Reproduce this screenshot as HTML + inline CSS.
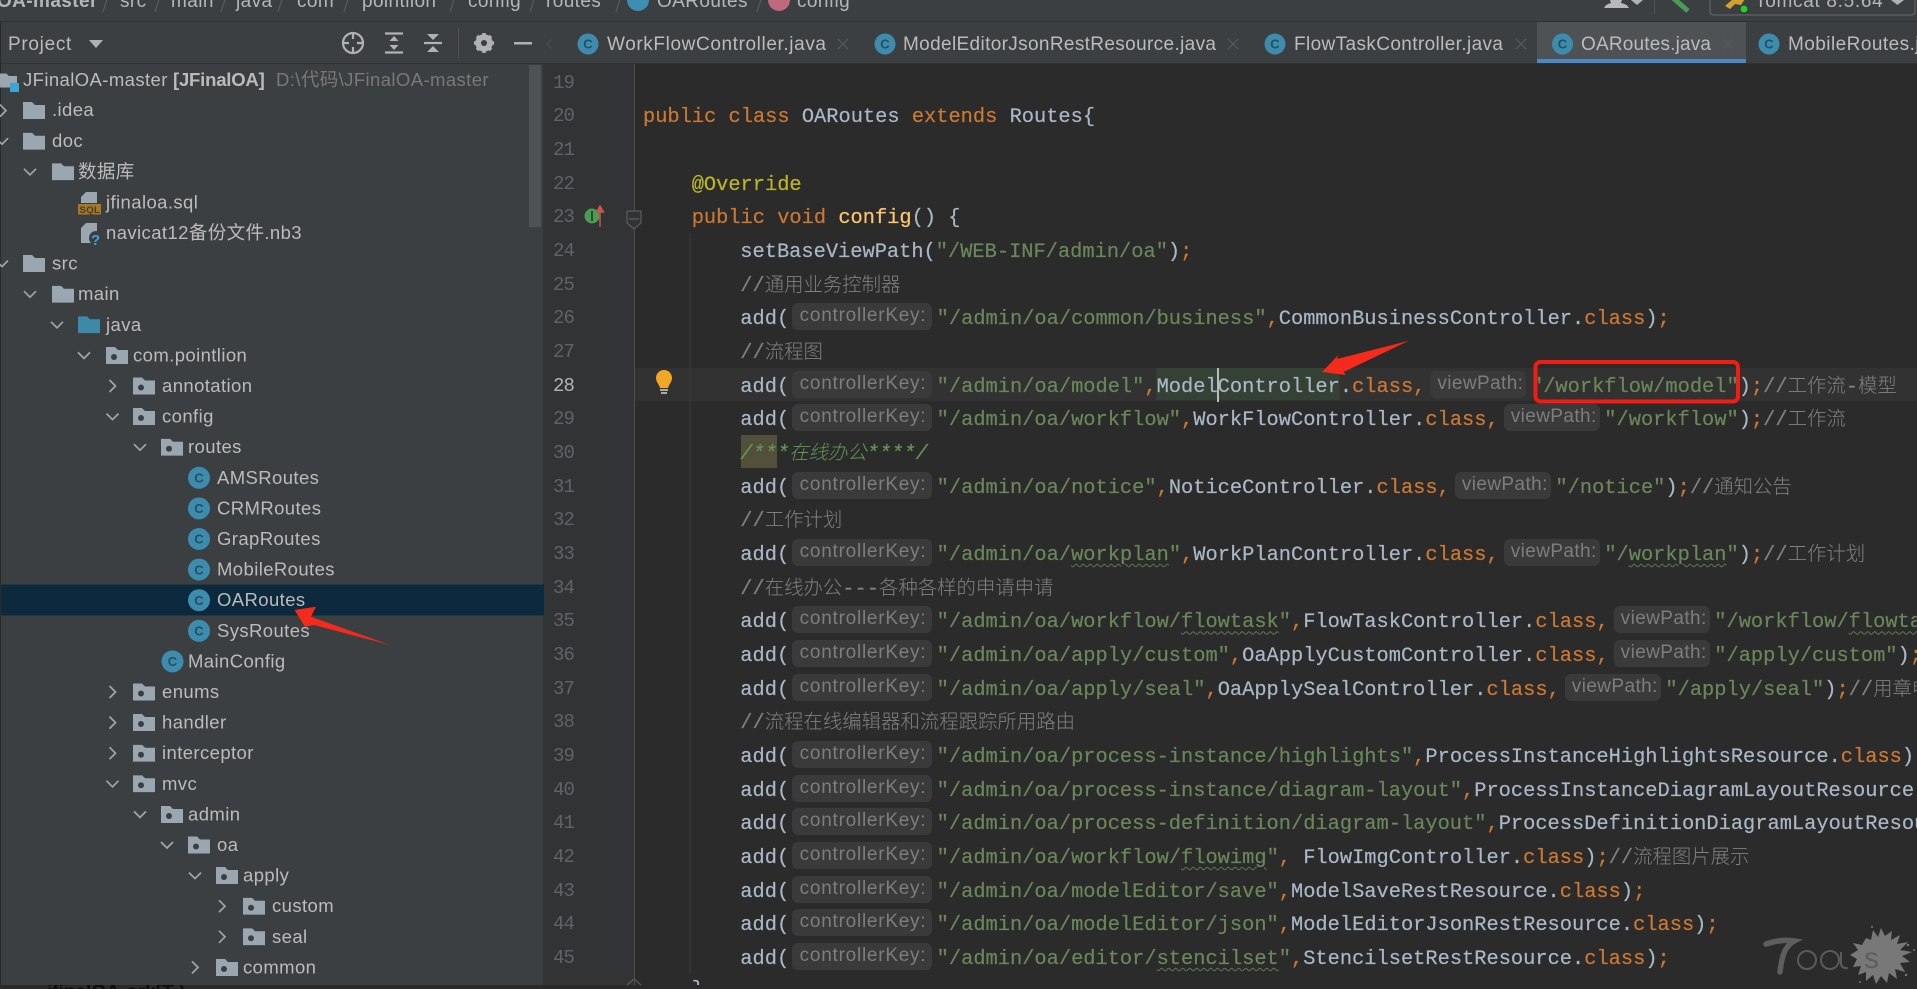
<!DOCTYPE html>
<html lang="zh">
<head>
<meta charset="utf-8">
<title>OARoutes.java</title>
<style>
html,body{margin:0;padding:0;background:#2b2b2b;}
#root{position:relative;width:1917px;height:989px;overflow:hidden;background:#2a2a2a;filter:blur(.3px);}
svg{position:absolute;left:0;top:0;}
#ed{position:absolute;left:0;top:0;width:1917px;height:985px;overflow:hidden;}
.l{position:absolute;left:740.300px;margin-top:3px;height:34px;white-space:nowrap;font:20.36px/34px "Liberation Mono","Noto Sans CJK SC",monospace;color:#a9b7c6;-webkit-text-stroke:.2px;}
.k{color:#cc7832}.s{color:#6a8759}.c{color:#808080}.m{color:#ffc66d}.a{color:#bbb529}
.z{font-family:"Noto Sans CJK SC","Liberation Sans",sans-serif;font-size:19.4px;font-weight:300;line-height:1;-webkit-text-stroke:0;}
.d{color:#629755;font-style:italic}
u{text-decoration:underline wavy #5d7a50 1px;text-underline-offset:3px;}
.h,.v{display:inline-block;height:27px;vertical-align:-6px;background:#3a3a3a;border-radius:6px;box-sizing:border-box;padding-left:8px;color:#7d7d7d;font:19px/26px "Liberation Sans",sans-serif;letter-spacing:.75px;overflow:hidden;-webkit-text-stroke:0;}
.h{width:140px;margin:0 5px 0 2.500px;}
.v{width:96px;margin:0 4.600px 0 5px;padding-left:7px;letter-spacing:.4px;}
.n{position:absolute;left:553px;margin-top:1px;height:34px;font:19px/34px "Liberation Mono",monospace;letter-spacing:-.9px;color:#606366;}
</style>
</head>
<body>
<div id="root">
<svg width="1917" height="989" viewBox="0 0 1917 989" xmlns="http://www.w3.org/2000/svg">
<defs>
<symbol id="f" viewBox="0 0 22 17" width="22" height="17"><path d="M0 0h9l3 3h10v14H0z" fill="#9aa7b0"/></symbol>
<symbol id="p" viewBox="0 0 22 17" width="22" height="17"><path d="M0 0h9l3 3h10v14H0z" fill="#9aa7b0"/><circle cx="8" cy="10" r="3" fill="#3c3f41"/></symbol>
<symbol id="b" viewBox="0 0 22 17" width="22" height="17"><path d="M0 0h9l3 3h10v14H0z" fill="#3e89a8"/></symbol>
<path id="cr" d="M-3-6l6 6-6 6" fill="none" stroke="#a3a6a8" stroke-width="1.7"/>
<path id="cd" d="M-6-3l6 6 6-6" fill="none" stroke="#a3a6a8" stroke-width="1.7"/>
</defs>

<!-- bottom cut-off page text -->
<text x="47" y="998" font-family="Liberation Sans,sans-serif" font-size="19" font-weight="bold" fill="#0d0d0d">jfinalOA-ork[T )</text>

<!-- backgrounds -->
<rect x="0" y="0" width="1917" height="21" fill="#3c3f41"/>
<rect x="0" y="21" width="1917" height="1" fill="#2f3133"/>
<rect x="1" y="22" width="542" height="963" fill="#3c3f41"/>
<rect x="0" y="22" width="1" height="963" fill="#2b2b2b"/>
<rect x="543" y="22" width="1374" height="41" fill="#3c3f41"/>
<rect x="1" y="63" width="1916" height="1" fill="#323232"/>
<rect x="543" y="64" width="91" height="921" fill="#313335"/>
<rect x="634" y="64" width="1283" height="921" fill="#2b2b2b"/>
<rect x="634" y="368" width="1283" height="33" fill="#323232"/>
<rect x="1156.500" y="368" width="183" height="32" fill="#344134"/>
<rect x="741" y="435" width="36" height="33" fill="#52503a"/>
<rect x="634" y="64" width="1" height="921" fill="#4c4e50"/>
<rect x="689.500" y="233" width="1" height="740" fill="#3b3b3b"/>
<rect x="543" y="584" width="1" height="31" fill="#0d293e"/>

<!-- breadcrumb -->
<g font-family="Liberation Sans,Noto Sans CJK SC,sans-serif" font-size="19" fill="#b4b6b8" letter-spacing=".4">
<text x="-3" y="7" font-weight="bold">OA-master</text>
<text x="120" y="7">src</text><text x="171" y="7">main</text><text x="236" y="7">java</text><text x="297" y="7">com</text>
<text x="362" y="7">pointlion</text><text x="468" y="7">config</text><text x="546" y="7">routes</text>
<text x="657" y="7">OARoutes</text><text x="797" y="7">config</text>
<text x="1755" y="7" letter-spacing=".7">Tomcat 8.5.64</text>
</g>
<g stroke="#595b5d" stroke-width="1.2"><path d="M103 12l5-16M155 12l5-16M221 12l5-16M278 12l5-16M344 12l5-16M450 12l5-16M530 12l5-16M616 12l5-16M757 12l5-16"/></g>
<circle cx="638" cy="0" r="11" fill="#3c8fb2"/>
<circle cx="779" cy="0" r="11" fill="#c0687e"/>

<!-- top right -->
<path d="M1604 8q2-4 7-5l-1-3h12l-1 3q6 1 8 5z" fill="#b6b8ba"/>
<path d="M1631 0h12l-6 5z" fill="#afb1b3"/>
<rect x="1654" y="0" width="1" height="14" fill="#515355"/>
<path d="M1672-3l16 14" stroke="#499c54" stroke-width="5" fill="none"/>
<path d="M1710 0v11q0 4 4 4h197q4 0 4-4V0" fill="none" stroke="#606264" stroke-width="1.3"/>
<path d="M1725 6l8-7h12l-4 6-6-1-5 5z" fill="#d0a030"/>
<circle cx="1744" cy="9" r="3.4" fill="#17d827"/>
<path d="M1891 0h13l-6.500 5z" fill="#afb1b3"/>

<!-- project header -->
<text x="8" y="50" font-family="Liberation Sans,sans-serif" font-size="19" fill="#bbbbbb" letter-spacing=".7">Project</text>
<path d="M89 40h14l-7 8z" fill="#afb1b3"/>
<g fill="none" stroke="#afb1b3" stroke-width="2.200">
<circle cx="353" cy="43" r="10"/><path d="M353 33v6M353 47v6M343 43h6M357 43h6"/>
<path d="M385 33.500h18M385 52.500h18"/>
<path d="M424 43h18"/>
</g>
<path d="M394 36l4.500 5h-9zM394 50l4.500-5h-9z" fill="#afb1b3"/>
<path d="M427 34h12l-6 6zM433 46l6 6h-12z" fill="#afb1b3"/>
<rect x="458" y="28" width="1" height="30" fill="#515355"/>
<circle cx="484" cy="43" r="6.500" fill="none" stroke="#afb1b3" stroke-width="4.500"/>
<g stroke="#afb1b3" stroke-width="3.500"><path d="M484 33v20M474 43h20M477 36l14 14M491 36l-14 14"/></g>
<circle cx="484" cy="43" r="3" fill="#3c3f41"/>
<rect x="514" y="42" width="18" height="2.500" fill="#afb1b3"/>

<!-- scrollbar + selected row -->
<rect x="529" y="65" width="12" height="162" fill="#4f5254"/>
<rect x="1" y="584.500" width="542" height="31" fill="#0d293e"/>

<!-- tree icons -->
<use href="#f" x="-1" y="72" width="18" height="17"/>
<rect x="10" y="83" width="9" height="9" fill="#3ba5d9"/>
<use href="#cr" x="3" y="110.600"/><use href="#f" x="23" y="102"/>
<use href="#cd" x="2" y="141.200"/><use href="#f" x="23" y="132.700"/>
<use href="#cd" x="30" y="171.800"/><use href="#f" x="52" y="163.300"/>
<path d="M81 203v-6l5-5h11v11z" fill="#9aa7b0"/><rect x="78" y="204" width="23" height="10.500" fill="#a8771f"/>
<text x="79.500" y="213" font-family="Liberation Sans,sans-serif" font-size="9.500" font-weight="bold" fill="#3c3f41" letter-spacing=".4">SQL</text>
<path d="M81 243v-15l5-5h11v20z" fill="#9aa7b0"/>
<circle cx="96" cy="238" r="7" fill="#3c3f41"/>
<text x="91" y="245" font-family="Liberation Sans,sans-serif" font-size="15" font-weight="bold" fill="#3ba5d9">?</text>
<use href="#cd" x="2" y="263.600"/><use href="#f" x="23" y="255"/>
<use href="#cd" x="30" y="294.200"/><use href="#f" x="52" y="285.700"/>
<use href="#cd" x="57" y="324.800"/><use href="#b" x="78" y="316.300"/>
<use href="#cd" x="84" y="355.400"/><use href="#p" x="106" y="347"/>
<use href="#cr" x="112.500" y="386"/><use href="#p" x="133" y="377.500"/>
<use href="#cd" x="112.500" y="416.600"/><use href="#p" x="133" y="408"/>
<use href="#cd" x="140" y="447.200"/><use href="#p" x="161" y="438.700"/>
<use href="#cr" x="112.500" y="692"/><use href="#p" x="133" y="683.500"/>
<use href="#cr" x="112.500" y="722.600"/><use href="#p" x="133" y="714"/>
<use href="#cr" x="112.500" y="753.200"/><use href="#p" x="133" y="744.700"/>
<use href="#cd" x="112.500" y="783.800"/><use href="#p" x="133" y="775.300"/>
<use href="#cd" x="140" y="814.400"/><use href="#p" x="161" y="806"/>
<use href="#cd" x="167" y="845"/><use href="#p" x="188" y="836.500"/>
<use href="#cd" x="195" y="875.600"/><use href="#p" x="216" y="867"/>
<use href="#cr" x="222" y="906.200"/><use href="#p" x="243" y="897.700"/>
<use href="#cr" x="222" y="936.800"/><use href="#p" x="243" y="928.300"/>
<use href="#cr" x="195" y="967.400"/><use href="#p" x="216" y="959"/>

<!-- class icons -->
<g fill="#3d8cae">
<circle cx="199" cy="477.800" r="11"/><circle cx="199" cy="508.400" r="11"/><circle cx="199" cy="539" r="11"/><circle cx="199" cy="569.600" r="11"/><circle cx="199" cy="600.200" r="11"/><circle cx="199" cy="630.800" r="11"/><circle cx="172.500" cy="661.400" r="11"/>
<circle cx="588" cy="44" r="10.500"/><circle cx="885" cy="44" r="10.500"/><circle cx="1275" cy="44" r="10.500"/>
</g>
<rect x="1537" y="22" width="209" height="37" fill="#4e5254"/>
<rect x="1537" y="59" width="209" height="4" fill="#4a88c7"/>
<circle cx="1562.500" cy="44" r="10.500" fill="#3d8cae"/><circle cx="1769" cy="44" r="10.500" fill="#3d8cae"/>
<g font-family="Liberation Sans,sans-serif" font-size="13" font-weight="bold" fill="#24505f" text-anchor="middle">
<text x="199" y="482.500">C</text><text x="199" y="513">C</text><text x="199" y="543.700">C</text><text x="199" y="574.300">C</text><text x="199" y="605">C</text><text x="199" y="635.500">C</text><text x="172.500" y="666">C</text>
<text x="588" y="48.700">C</text><text x="885" y="48.700">C</text><text x="1275" y="48.700">C</text><text x="1562.500" y="48.700">C</text><text x="1769" y="48.700">C</text>
</g>

<!-- tree text -->
<g font-family="Liberation Sans,Noto Sans CJK SC,sans-serif" font-size="18.500" fill="#bbbbbb" letter-spacing=".4">
<text x="23" y="86">JFinalOA-master</text>
<text x="173" y="86" font-weight="bold" letter-spacing="-.2">[JFinalOA]</text>
<text x="276" y="86" fill="#787878">D:\代码\JFinalOA-master</text>
<text x="52" y="116">.idea</text>
<text x="52" y="147.200">doc</text>
<text x="78" y="177.800">数据库</text>
<text x="106" y="208.400">jfinaloa.sql</text>
<text x="106" y="239">navicat12备份文件.nb3</text>
<text x="52" y="269.600">src</text>
<text x="78" y="300.200">main</text>
<text x="106" y="330.800">java</text>
<text x="133" y="361.400">com.pointlion</text>
<text x="162" y="392">annotation</text>
<text x="162" y="422.600">config</text>
<text x="188" y="453.200">routes</text>
<text x="217" y="483.800">AMSRoutes</text>
<text x="217" y="514.400">CRMRoutes</text>
<text x="217" y="545">GrapRoutes</text>
<text x="217" y="575.600">MobileRoutes</text>
<text x="217" y="606.200">OARoutes</text>
<text x="217" y="636.800">SysRoutes</text>
<text x="188" y="667.400">MainConfig</text>
<text x="162" y="698">enums</text>
<text x="162" y="728.600">handler</text>
<text x="162" y="759.200">interceptor</text>
<text x="162" y="789.800">mvc</text>
<text x="188" y="820.400">admin</text>
<text x="217" y="851">oa</text>
<text x="243" y="881.600">apply</text>
<text x="272" y="912.200">custom</text>
<text x="272" y="942.800">seal</text>
<text x="243" y="973.400">common</text>
</g>

<!-- tabs text -->
<g font-family="Liberation Sans,sans-serif" font-size="19" fill="#bbbbbb">
<text x="607" y="50" textLength="219">WorkFlowController.java</text>
<text x="903" y="50" textLength="313">ModelEditorJsonRestResource.java</text>
<text x="1294" y="50" textLength="209">FlowTaskController.java</text>
<text x="1581" y="50" textLength="130">OARoutes.java</text>
<text x="1788" y="50" letter-spacing=".45">MobileRoutes.java</text>
</g>
<g stroke="#585b5d" stroke-width="1.200" fill="none"><path d="M838 39l10 10M848 39l-10 10M1228 39l10 10M1238 39l-10 10M1516 39l10 10M1526 39l-10 10M1723 39l10 10M1733 39l-10 10"/></g>
<path d="M552 39l-5 5 5 5" fill="none" stroke="#4b4e50" stroke-width="1.300"/>

<!-- gutter icons -->
<circle cx="592" cy="216" r="7.500" fill="#499c54"/>
<rect x="591" y="211" width="2" height="10" fill="#2b4a30"/>
<path d="M600 227v-16M596.500 212l3.500-6 3.500 6z" stroke="#c75450" stroke-width="1.500" fill="#c75450"/>
<path d="M627 211h14v12l-7 6-7-6zM629 219h10" fill="#313335" stroke="#5a5c5e" stroke-width="1.200"/>
<path d="M627 985l7-6 7 6" fill="none" stroke="#5a5c5e" stroke-width="1.200"/>
<path d="M664 370c-5 0-8 4-8 8 0 4 3 6 4 10h8c1-4 4-6 4-10 0-4-3-8-8-8z" fill="#f2a725"/>
<rect x="660" y="389" width="8" height="2" fill="#aaa"/><rect x="661" y="392" width="6" height="2" fill="#aaa"/>
</svg>

<div id="ed">
<div class="n" style="top:64.500px">19</div>
<div class="n" style="top:98.200px">20</div>
<div class="n" style="top:131.900px">21</div>
<div class="n" style="top:165.500px">22</div>
<div class="n" style="top:199.200px">23</div>
<div class="n" style="top:232.900px">24</div>
<div class="n" style="top:266.600px">25</div>
<div class="n" style="top:300.200px">26</div>
<div class="n" style="top:333.900px">27</div>
<div class="n" style="top:367.600px;color:#b4b4b4">28</div>
<div class="n" style="top:401.300px">29</div>
<div class="n" style="top:435px">30</div>
<div class="n" style="top:468.600px">31</div>
<div class="n" style="top:502.300px">32</div>
<div class="n" style="top:536px">33</div>
<div class="n" style="top:569.700px">34</div>
<div class="n" style="top:603.300px">35</div>
<div class="n" style="top:637px">36</div>
<div class="n" style="top:670.700px">37</div>
<div class="n" style="top:704.400px">38</div>
<div class="n" style="top:738px">39</div>
<div class="n" style="top:771.700px">40</div>
<div class="n" style="top:805.400px">41</div>
<div class="n" style="top:839.100px">42</div>
<div class="n" style="top:872.700px">43</div>
<div class="n" style="top:906.400px">44</div>
<div class="n" style="top:940.100px">45</div>

<div class="l" style="top:98.200px;left:643px"><span class="k">public class </span>OARoutes <span class="k">extends </span>Routes{</div>
<div class="l" style="top:165.500px;left:691.700px"><span class="a">@Override</span></div>
<div class="l" style="top:199.200px;left:691.700px"><span class="k">public void </span><span class="m">config</span>() {</div>
<div class="l" style="top:232.900px">setBaseViewPath(<span class="s">"/WEB-INF/admin/oa"</span>)<span class="k">;</span></div>
<div class="l c" style="top:266.600px">//<span class="z">通用业务控制器</span></div>
<div class="l" style="top:300.200px">add(<span class="h">controllerKey:</span><span class="s">"/admin/oa/common/business"</span><span class="k">,</span>CommonBusinessController.<span class="k">class</span>)<span class="k">;</span></div>
<div class="l c" style="top:333.900px">//<span class="z">流程图</span></div>
<div class="l" style="top:367.600px">add(<span class="h">controllerKey:</span><span class="s">"/admin/oa/model"</span><span class="k">,</span>ModelController.<span class="k">class,</span><span class="v">viewPath:</span><span class="s">"/workflow/model"</span>)<span class="k">;</span><span class="c">//<span class="z">工作流</span>-<span class="z">模型</span></span></div>
<div class="l" style="top:401.300px">add(<span class="h">controllerKey:</span><span class="s">"/admin/oa/workflow"</span><span class="k">,</span>WorkFlowController.<span class="k">class,</span><span class="v">viewPath:</span><span class="s">"/workflow"</span>)<span class="k">;</span><span class="c">//<span class="z">工作流</span></span></div>
<div class="l d" style="top:435px">/***<span class="z">在线办公</span>****/</div>
<div class="l" style="top:468.600px">add(<span class="h">controllerKey:</span><span class="s">"/admin/oa/notice"</span><span class="k">,</span>NoticeController.<span class="k">class,</span><span class="v">viewPath:</span><span class="s">"/notice"</span>)<span class="k">;</span><span class="c">//<span class="z">通知公告</span></span></div>
<div class="l c" style="top:502.300px">//<span class="z">工作计划</span></div>
<div class="l" style="top:536px">add(<span class="h">controllerKey:</span><span class="s">"/admin/oa/<u>workplan</u>"</span><span class="k">,</span>WorkPlanController.<span class="k">class,</span><span class="v">viewPath:</span><span class="s">"/<u>workplan</u>"</span>)<span class="k">;</span><span class="c">//<span class="z">工作计划</span></span></div>
<div class="l c" style="top:569.700px">//<span class="z">在线办公</span>---<span class="z">各种各样的申请申请</span></div>
<div class="l" style="top:603.300px">add(<span class="h">controllerKey:</span><span class="s">"/admin/oa/workflow/<u>flowtask</u>"</span><span class="k">,</span>FlowTaskController.<span class="k">class,</span><span class="v">viewPath:</span><span class="s">"/workflow/<u>flowtask</u>"</span>)<span class="k">;</span></div>
<div class="l" style="top:637px">add(<span class="h">controllerKey:</span><span class="s">"/admin/oa/apply/custom"</span><span class="k">,</span>OaApplyCustomController.<span class="k">class,</span><span class="v">viewPath:</span><span class="s">"/apply/custom"</span>)<span class="k">;</span></div>
<div class="l" style="top:670.700px">add(<span class="h">controllerKey:</span><span class="s">"/admin/oa/apply/seal"</span><span class="k">,</span>OaApplySealController.<span class="k">class,</span><span class="v">viewPath:</span><span class="s">"/apply/seal"</span>)<span class="k">;</span><span class="c">//<span class="z">用章申请</span></span></div>
<div class="l c" style="top:704.400px">//<span class="z">流程在线编辑器和流程跟踪所用路由</span></div>
<div class="l" style="top:738px">add(<span class="h">controllerKey:</span><span class="s">"/admin/oa/process-instance/highlights"</span><span class="k">,</span>ProcessInstanceHighlightsResource.<span class="k">class</span>)<span class="k">;</span></div>
<div class="l" style="top:771.700px">add(<span class="h">controllerKey:</span><span class="s">"/admin/oa/process-instance/diagram-layout"</span><span class="k">,</span>ProcessInstanceDiagramLayoutResource.<span class="k">class</span>)<span class="k">;</span></div>
<div class="l" style="top:805.400px">add(<span class="h">controllerKey:</span><span class="s">"/admin/oa/process-definition/diagram-layout"</span><span class="k">,</span>ProcessDefinitionDiagramLayoutResource.<span class="k">class</span>)<span class="k">;</span></div>
<div class="l" style="top:839.100px">add(<span class="h">controllerKey:</span><span class="s">"/admin/oa/workflow/<u>flowimg</u>"</span><span class="k">,</span> FlowImgController.<span class="k">class</span>)<span class="k">;</span><span class="c">//<span class="z">流程图片展示</span></span></div>
<div class="l" style="top:872.700px">add(<span class="h">controllerKey:</span><span class="s">"/admin/oa/modelEditor/save"</span><span class="k">,</span>ModelSaveRestResource.<span class="k">class</span>)<span class="k">;</span></div>
<div class="l" style="top:906.400px">add(<span class="h">controllerKey:</span><span class="s">"/admin/oa/modelEditor/json"</span><span class="k">,</span>ModelEditorJsonRestResource.<span class="k">class</span>)<span class="k">;</span></div>
<div class="l" style="top:940.100px">add(<span class="h">controllerKey:</span><span class="s">"/admin/oa/editor/<u>stencilset</u>"</span><span class="k">,</span>StencilsetRestResource.<span class="k">class</span>)<span class="k">;</span></div>
<div class="l" style="top:971px;left:691.700px">}</div>
</div>

<svg width="1917" height="989" viewBox="0 0 1917 989" xmlns="http://www.w3.org/2000/svg">
<!-- caret -->
<rect x="1217" y="368" width="2" height="34" fill="#bbbbbb"/>
<!-- annotations -->
<polygon points="294.600,610 316,606.700 311,616.700 390,645 314,625 305,626.700" fill="#f5291c"/>
<polygon points="1322,372 1338.400,355 1337,359 1409,340.700 1343.600,372 1345.800,375" fill="#f5291c"/>
<rect x="1535.500" y="362" width="202.500" height="39.500" rx="5" fill="none" stroke="#f01d12" stroke-width="4"/>
<!-- watermark -->
<path d="M1766 944q14-5 28-3-4 2-8 8t-6 23" fill="none" stroke="#5e5e5e" stroke-width="5.500" stroke-linecap="round"/>
<g fill="none" stroke="#5a5a5a" stroke-width="2"><circle cx="1807" cy="960" r="9"/><circle cx="1830" cy="960" r="9"/></g>
<polygon points="1866,938 1871,940 1873,930 1878,937 1881,928 1885,936 1892,931 1891,940 1900,935 1897,944 1908,942 1900,950 1912,952 1902,956 1910,962 1900,963 1905,972 1895,969 1897,979 1889,973 1887,983 1881,976 1876,984 1873,975 1866,981 1866,972 1858,975 1861,966 1853,967 1857,959 1850,955 1858,950 1853,943 1862,945" fill="#787878"/>
<g fill="#787878"><circle cx="1908" cy="945" r="1.200"/><circle cx="1914" cy="950" r="1"/><circle cx="1906" cy="975" r="1.200"/><circle cx="1860" cy="982" r="1"/><circle cx="1872" cy="927" r="1"/></g>
<path d="M1841 952v12q1 5 7 4" fill="none" stroke="#5a5a5a" stroke-width="2"/>
<text x="1864" y="968" font-family="Liberation Sans,sans-serif" font-size="30" fill="#5e5e5e">s</text>
</svg>
</div>
</body>
</html>
